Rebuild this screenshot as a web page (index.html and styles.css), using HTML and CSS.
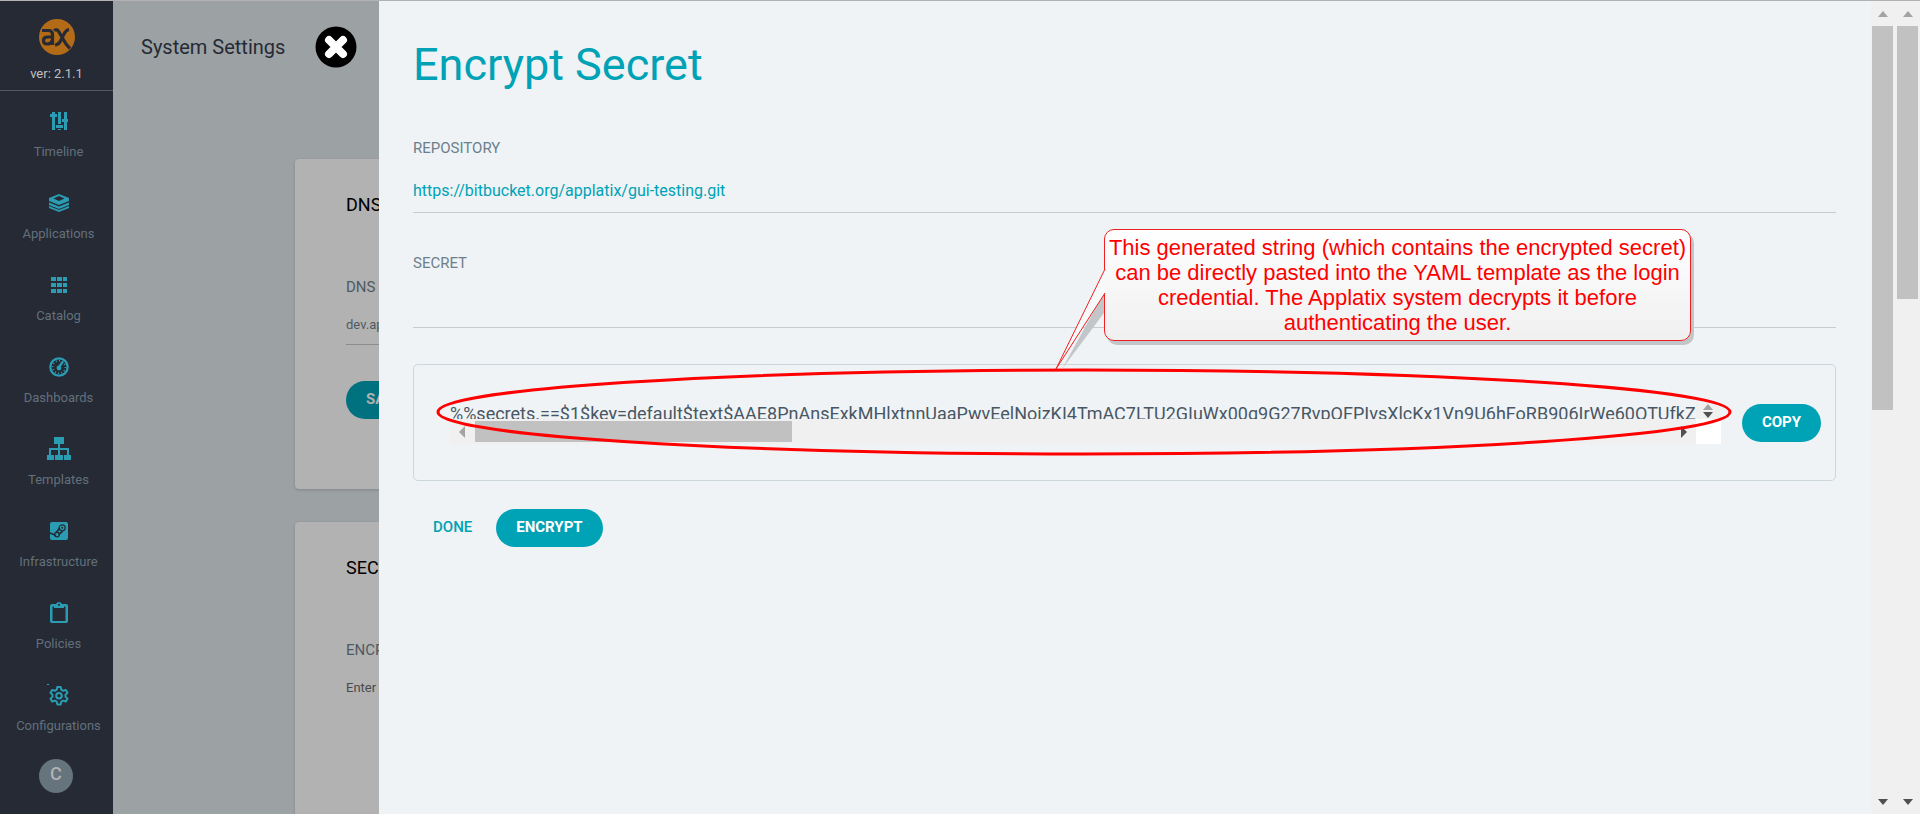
FILE: index.html
```html
<!DOCTYPE html>
<html lang="en">
<head>
<meta charset="utf-8">
<title>System Settings</title>
<link rel="stylesheet" href="styles.css">
</head>
<body>
<div class="app">
  <nav class="sidebar">
    <div class="brand">
      <svg class="logo" viewBox="0 0 36 36"><circle cx="18" cy="18" r="18" fill="#b36b17"/><g fill="none" stroke="#252a35" stroke-width="3.2"><path d="M3 11.500H9.500Q13.500 11.500 13.500 15.500V26M13.500 18H8.500Q4.500 18 4.500 21.500T8 25Q12 25 13.500 21.500"/><path d="M15 11.500Q18 9.500 20 13L24 20Q27 26 31 29.500M30 10.500Q27 11 25 15L22 21Q20 25.500 16 26"/></g></svg>
      <span class="version">ver: 2.1.1</span>
    </div>
    <a class="item" href="#"><svg viewBox="0 0 24 24"><path d="M5 3h3v18H5zM3 5h7v3H3zM11 3h3v12h-3zM9 16h7v3H9zM11 20h3v1h-3zM17 3h3v18h-3zM15 10h6v3h-6z"/></svg><span>Timeline</span></a>
    <a class="item" href="#"><svg viewBox="0 0 24 24"><path fill-rule="evenodd" d="M12 3l10 4v3l-10 4L2 10V7zM12 5L6.500 7.500 12 10l5.500-2.500zM2 11.500l10 4 10-4V14l-10 4L2 14zM2 15l10 4 10-4v2l-10 4L2 17z"/></svg><span>Applications</span></a>
    <a class="item" href="#"><svg viewBox="0 0 24 24"><path d="M4 4h5v4H4zM10 4h5v4h-5zM16 4h4v4h-4zM4 10h5v4H4zM10 10h5v4h-5zM16 10h4v4h-4zM4 16h5v4H4zM10 16h5v4h-5zM16 16h4v4h-4z"/></svg><span>Catalog</span></a>
    <a class="item" href="#"><svg viewBox="0 0 24 24"><g fill="none" stroke="#2a9db2"><circle cx="12" cy="12" r="8.700" stroke-width="2.200"/><circle cx="12" cy="12" r="6.300" stroke-width="1.800" stroke-dasharray="1 2.300" pathLength="39.600"/><path d="M12 12l4-5.500" stroke-width="2.200"/></g><circle cx="12" cy="13" r="2.400"/></svg><span>Dashboards</span></a>
    <a class="item" href="#"><svg viewBox="0 0 24 24"><path d="M7 0h10v7h-4v4h9v7h2v5h-7v-5h3v-5h-7v5h3v5H8v-5h3v-5H4v5h3v5H0v-5h2v-7h9V7H7z"/></svg><span>Templates</span></a>
    <a class="item" href="#"><svg viewBox="0 0 24 24"><rect x="3" y="3" width="18" height="18" rx="2"/><g fill="none" stroke="#252a35"><circle cx="15.200" cy="8.800" r="3" stroke-width="1.200"/><circle cx="10" cy="15.500" r="2.400" stroke-width="1.200"/><path d="M3 14l6 2.500M9 14l3.500-5M11.500 15.500l4-3" stroke-width="1.600"/></g><circle cx="15.200" cy="8.800" r="1" fill="#252a35"/></svg><span>Infrastructure</span></a>
    <a class="item" href="#"><svg viewBox="0 0 24 24"><path fill-rule="evenodd" d="M5 3h4Q10 1 12 1t3 2h4q2 0 2 2v15q0 2-2 2H5q-2 0-2-2V5q0-2 2-2zM5.500 5.500V20h13V5.500H17V7H7V5.500zM12 2.800a1 1 0 1 0 .1 0z"/></svg><span>Policies</span></a>
    <a class="item" href="#"><svg viewBox="0 0 24 24"><path fill="none" stroke="#2a9db2" stroke-width="2" stroke-linejoin="round" d="M10.300 4h3.400l.6 2.700 1.900 1.100 2.700-.9 1.600 2.900-2 1.900v2l2 1.900-1.600 2.900-2.700-.9-1.900 1.100-.6 2.700h-3.400l-.6-2.700-1.900-1.100-2.700.9-1.600-2.900 2-1.900v-2l-2-1.900 1.600-2.900 2.700.9 1.900-1.100z"/><circle cx="12" cy="12.700" r="2.800" fill="none" stroke="#2a9db2" stroke-width="2"/><path d="M0 1h2v1H0z"/></svg><span>Configurations</span></a>
    <button class="avatar" type="button">C</button>
  </nav>

  <main class="page">
    <header class="page-head">
      <h2>System Settings</h2>
      <button class="close" type="button" aria-label="Close"><svg viewBox="0 0 42 42"><circle cx="21" cy="21" r="20.500"/><path d="M14 14l14 14M28 14L14 28" stroke="#fff" stroke-width="8" stroke-linecap="round"/></svg></button>
    </header>
    <section class="card">
      <h3>DNS</h3>
      <label for="dns">DNS NAME</label>
      <input id="dns" class="card-input" value="dev.applatix.net">
      <button class="btn dim" type="button">SAVE</button>
    </section>
    <section class="card">
      <h3>SECRET</h3>
      <h4>ENCRYPT</h4>
      <p>Enter a secret to encrypt</p>
    </section>
  </main>

  <aside class="panel">
    <h1>Encrypt Secret</h1>
    <form>
      <label for="repo">REPOSITORY</label>
      <input id="repo" class="field" value="https://bitbucket.org/applatix/gui-testing.git">
      <label for="secret">SECRET</label>
      <input id="secret" class="field" type="password">
      <div class="result">
        <div class="output">
          <textarea aria-label="Encrypted string" wrap="off" rows="1" readonly>%%secrets.==$1$key=default$text$AAE8PnAnsExkMHlxtnnUaaPwvEelNoizKI4TmAC7LTU2GIuWx00g9G27RvpOFPIvsXlcKx1Vn9U6hFoRB906IrWe60OTUfkZ</textarea>
          <div class="spin"><i class="up"></i><i class="down"></i></div>
          <div class="hscroll"><i class="left"></i><i class="thumb"></i><i class="right"></i></div>
          <div class="corner"></div>
        </div>
        <button class="btn" type="button">COPY</button>
      </div>
      <div class="actions">
        <button class="link" type="button">DONE</button>
        <button class="btn" type="button">ENCRYPT</button>
      </div>
    </form>
    <svg class="ring" viewBox="0 0 1296 88" preserveAspectRatio="none"><ellipse cx="648" cy="44" rx="646" ry="42"/></svg>
    <div class="callout">
      <svg class="tail" viewBox="0 0 56 108"><path d="M49 30L7 106 49 50z" fill="#c3c6c8"/><path d="M50 6L1 106 50 30" fill="#f8f9fa" stroke="#f02020"/></svg>
      This generated string (which contains the encrypted secret) can be directly pasted into the YAML template as the login credential. The Applatix system decrypts it before authenticating the user.
    </div>
  </aside>
  <div class="vscroll"><i class="up"></i><i class="thumb tall"></i><i class="down"></i></div>
  <div class="vscroll"><i class="up"></i><i class="thumb"></i><i class="down"></i></div>
</div>
</body>
</html>
```

FILE: styles.css
```css
* { box-sizing: border-box; }
body { margin: 0; font-family: Roboto, "Liberation Sans", sans-serif; color: #6d7f8b; }
h1, h2, h3, h4, p { margin: 0; font-weight: 400; }
button, input, textarea { font-family: inherit; border: 0; margin: 0; padding: 0; background: none; }
input, textarea { outline: 0; border-radius: 0; }

.app { display: flex; height: 100vh; overflow: hidden; border-top: 1px solid #b1b1b6; }

.sidebar { flex: 0 0 113px; display: flex; flex-direction: column; background: #252a35; }
.brand { flex: none; display: flex; flex-direction: column; align-items: center; height: 90px; padding-top: 18px; border-bottom: 1px solid #55585f; }
.logo { width: 36px; height: 36px; }
.version { margin-top: 10px; font-size: 13px; line-height: 18px; color: #c0c0c0; }
.item { flex: none; display: flex; flex-direction: column; align-items: center; height: 82px; padding: 18px 0 0 4px; font-size: 13px; line-height: 16px; color: #63707b; text-decoration: none; }
.item svg { width: 24px; height: 24px; margin-bottom: 11px; fill: #2a9db2; }
.avatar { flex: none; width: 34px; height: 34px; margin: 12px 0 0 39px; border-radius: 17px; background: #66747d; color: #b2b2b2; font-size: 18px; line-height: 30px; padding-bottom: 4px; font-weight: 500; }

.page { flex: 0 0 266px; overflow: hidden; background: #9ca1a4; }
.page-head { display: flex; align-items: center; gap: 30px; height: 158px; padding: 0 0 67px 28px; }
.page-head h2 { font-size: 20px; line-height: 24px; color: #252a35; white-space: nowrap; }
.close { width: 42px; height: 42px; }
.close svg { display: block; }
.card { width: 1200px; height: 330px; margin: 0 0 33px 182px; padding: 34px 51px; border-radius: 4px; background: #b2b2b2; box-shadow: 0 1px 3px #80858a; }
.card h3 { font-size: 18px; line-height: 24px; color: #000; }
.card label, .card h4 { display: block; margin-top: 58px; font-size: 15px; line-height: 24px; color: #4f5b63; }
.card-input { width: 100%; height: 46px; padding-top: 6px; border-bottom: 1px solid #8c8c8c; font-size: 13px; color: #4f5b63; }
.card p { margin-top: 16px; font-size: 13px; line-height: 20px; color: #4a4a4a; }
.btn { flex: none; height: 38px; padding: 0 20px 2px; border-radius: 19px; background: #00a2b5; color: #fff; font-size: 15px; font-weight: 700; }
.btn.dim { margin-top: 36px; background: #00717f; color: #b2b2b2; }

.panel { position: relative; flex: 1; min-width: 0; padding: 37px 35px 0 34px; background: #eff3f6; }
.panel h1 { font-size: 45px; line-height: 54px; color: #00a2b5; }
form > label { display: block; padding-top: 38px; font-size: 15px; line-height: 24px; }
form > label:first-child { padding-top: 44px; }
.field { display: block; width: 100%; height: 53px; padding-top: 8px; border-bottom: 1px solid #c9ccce; font-size: 16px; color: #00a2b5; }
.result { display: flex; justify-content: space-between; align-items: flex-start; gap: 21px; height: 117px; margin-top: 36px; padding: 39px 14px 0 36px; border: 1px solid #ccd6db; border-radius: 5px; }
.output { flex: 1; display: grid; grid-template-columns: 1fr 25px; grid-template-rows: 15px 25px; }
.output textarea { display: block; width: 100%; height: 15px; resize: none; overflow: hidden; white-space: pre; font-size: 18px; line-height: 20px; color: #495763; }
.spin { display: flex; flex-direction: column; align-items: center; gap: 2px; background: #f0f0f0; }
.up, .down { border: 5px solid transparent; border-top: 0; border-bottom: 6px solid #a3a3a3; }
.down { border-top: 6px solid #505050; border-bottom: 0; }
.hscroll { display: flex; align-items: center; padding: 0 9px; background: #f0f0f0; }
.hscroll .thumb { width: 317px; height: 21px; margin: 0 auto 0 10px; background: #c1c1c1; }
.left, .right { border: 6px solid transparent; border-left: 0; border-right: 6px solid #a3a3a3; }
.right { border-left: 6px solid #505050; border-right: 0; }
.corner { background: #fff; }
.actions { display: flex; align-items: center; gap: 24px; margin: 28px 0 0 20px; }
.link { padding-bottom: 2px; color: #00a2b5; font-size: 15px; font-weight: 500; }

.ring { position: absolute; left: 57px; top: 367px; width: 1296px; height: 88px; fill: none; stroke: #f00; stroke-width: 3; }
.callout { position: absolute; left: 725px; top: 228px; width: 587px; padding: 5px 2px; border: 1px solid #f02020; border-radius: 10px; background: linear-gradient(#fff, #f0f0f1); box-shadow: 3px 4px 0 #c3c6c8; color: #f00; font-family: "Liberation Sans", Arial, sans-serif; font-size: 22px; line-height: 25px; text-align: center; }
.tail { position: absolute; left: -50px; top: 33px; width: 56px; height: 108px; }

.vscroll { flex: 0 0 25px; display: flex; flex-direction: column; align-items: center; padding: 10px 2px 9px 0; background: #f0f0f0; }
.vscroll + .vscroll { flex-basis: 24px; padding-right: 1px; }
.vscroll .thumb { width: 21px; height: 273px; margin: 9px 0 auto; background: #c1c1c1; }
.vscroll .tall { height: 384px; }
```
